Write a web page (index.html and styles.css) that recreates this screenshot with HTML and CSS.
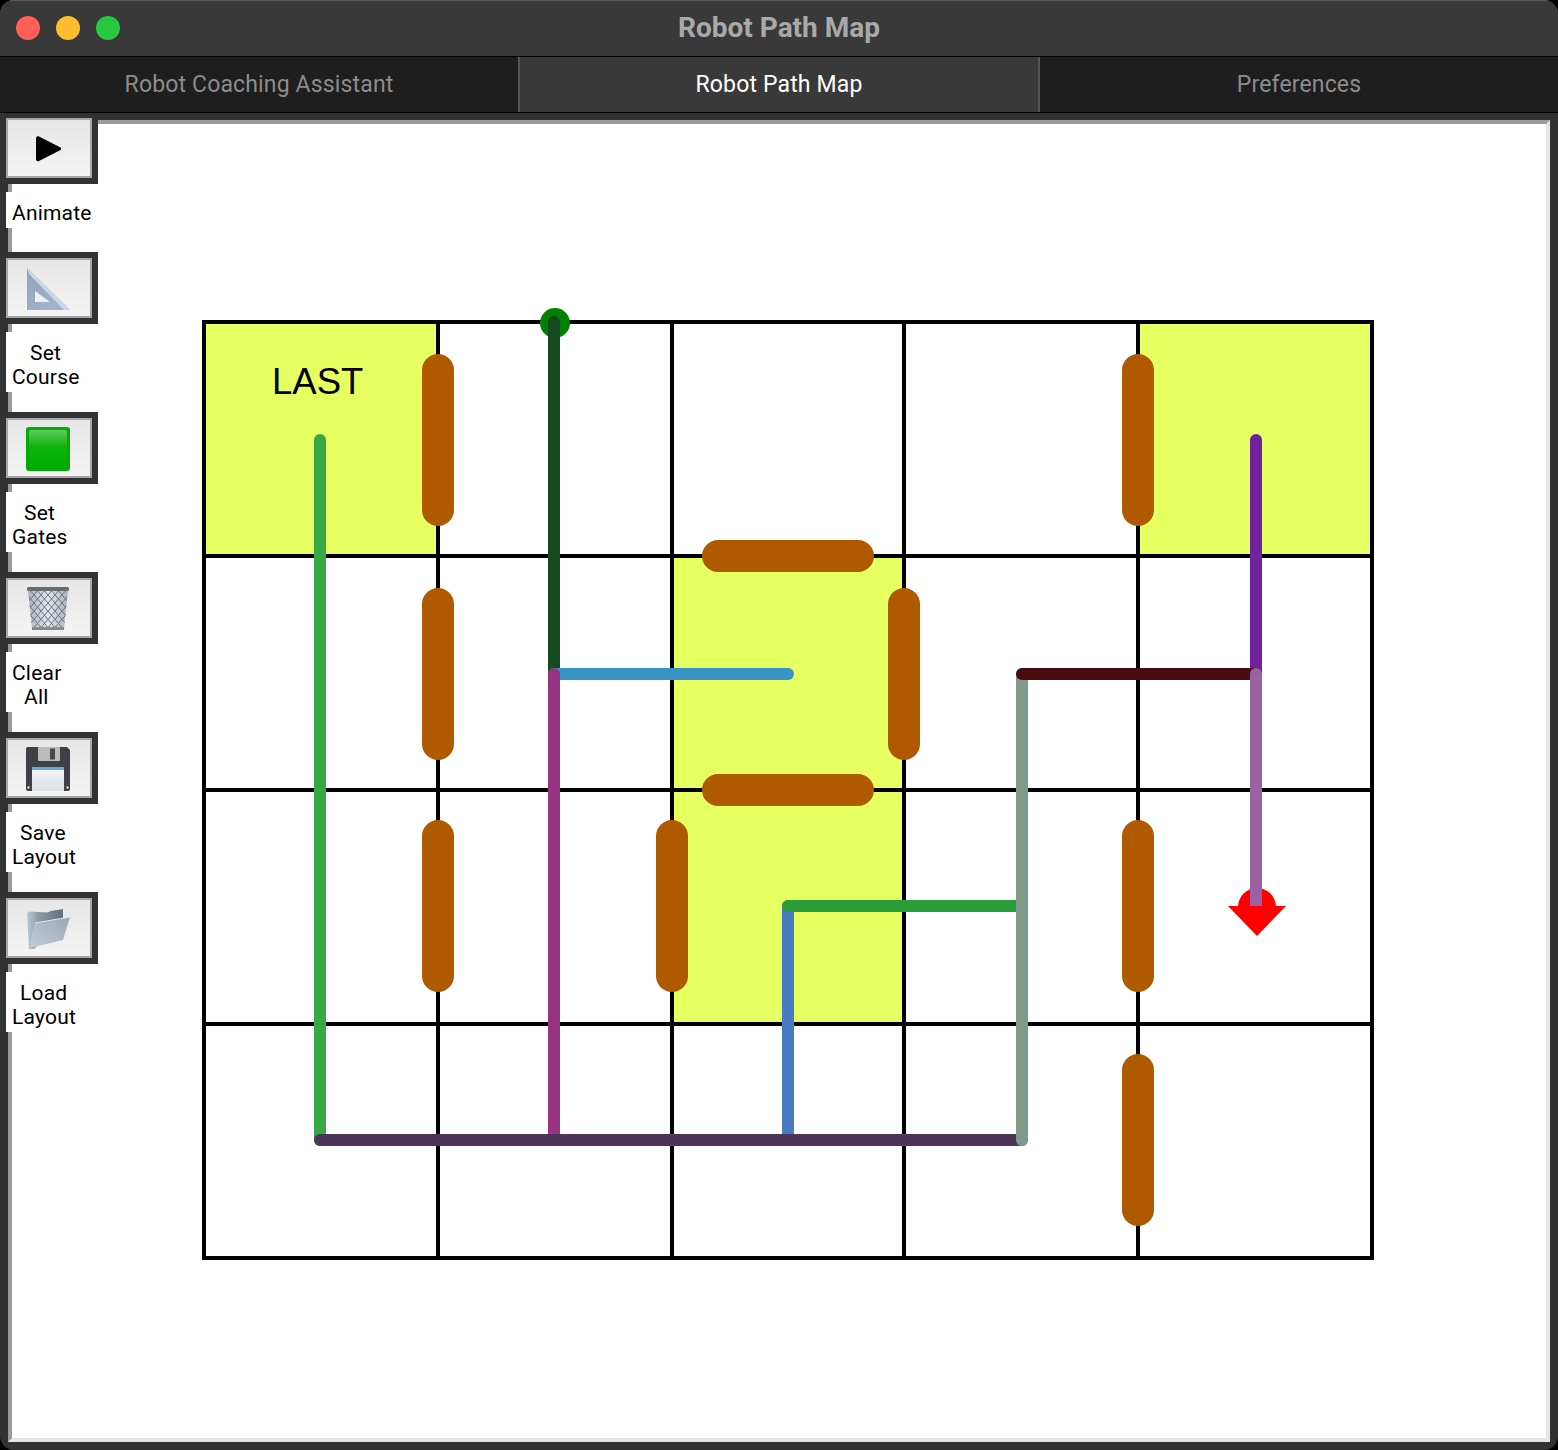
FILE: index.html
```html
<!DOCTYPE html>
<html lang="en">
<head>
  <meta charset="UTF-8">
  <title>Robot Path Map</title>
  <link rel="stylesheet" href="styles.css">
</head>
<body>
  <div class="window">

    <div class="titlebar">
      <div class="lights">
        <span class="light red"></span>
        <span class="light yellow"></span>
        <span class="light green"></span>
      </div>
      <div class="title">Robot Path Map</div>
    </div>

    <div class="tabs">
      <div class="tab">Robot Coaching Assistant</div>
      <div class="tab active">Robot Path Map</div>
      <div class="tab">Preferences</div>
    </div>

    <div class="content">
      <div class="pane">
        <svg class="map" width="1534" height="1314" viewBox="12 124 1534 1314">
          <!-- goal cells -->
          <rect class="goal" x="204" y="322" width="234" height="234"/>
          <rect class="goal" x="1138" y="322" width="234" height="234"/>
          <rect class="goal" x="672" y="556" width="232" height="468"/>

          <!-- grid -->
          <g class="grid">
            <path d="M438 322V1258M672 322V1258M904 322V1258M1138 322V1258"/>
            <path d="M204 556H1372M204 790H1372M204 1024H1372"/>
            <rect x="204" y="322" width="1168" height="936"/>
          </g>

          <text class="cell-label" x="272" y="394">LAST</text>

          <!-- walls -->
          <g class="walls">
            <path d="M438 370V510M438 604V744M438 836V976"/>
            <path d="M672 836V976"/>
            <path d="M718 556H858M718 790H858"/>
            <path d="M904 604V744"/>
            <path d="M1138 370V510M1138 836V976M1138 1070V1210"/>
          </g>

          <!-- start + end markers -->
          <circle cx="555" cy="323" r="15" fill="#028002"/>
          <circle cx="1257" cy="907" r="19" fill="#ff0000"/>

          <!-- course segments, in draw order -->
          <g class="segments">
            <path stroke="#38a845" d="M320 440V1140"/>
            <path stroke="#134a20" d="M554 322V674"/>
            <path stroke="#3794c4" d="M554 674H788"/>
            <path stroke="#993283" d="M554 674V1140"/>
            <path stroke="#4a7abf" d="M788 906V1140"/>
            <path stroke="#4b3659" d="M320 1140H1022"/>
            <path stroke="#2a9c38" d="M788 906H1022"/>
            <path stroke="#7f9a88" d="M1022 674V1140"/>
            <path stroke="#6f219e" d="M1256 440V674"/>
            <path stroke="#470d0f" d="M1022 674H1256"/>
            <path stroke="#9b61a0" d="M1256 674V906"/>
          </g>
          <polygon points="1228,906 1286,906 1257,936" fill="#ff0000"/>
        </svg>
      </div>

      <div class="toolbar">
        <div class="tool">
          <div class="tool-frame"><button class="tool-btn">
            <svg width="26" height="26" viewBox="0 0 26 26"><path d="M1 2.500C1 .6 2.600-.3 4 .5L25 11.200c1.400.8 1.400 2.400 0 3.100L4 25C2.600 25.800 1 24.900 1 23Z" fill="#000"/></svg>
          </button></div>
          <div class="tool-label">Animate</div>
        </div>

        <div class="tool">
          <div class="tool-frame"><button class="tool-btn">
            <svg width="44" height="46" viewBox="0 0 44 46">
              <defs><linearGradient id="sq" x1="0" y1="0" x2="1" y2="1"><stop offset="0" stop-color="#8ea3bf"/><stop offset="1" stop-color="#a6b8cf"/></linearGradient></defs>
              <path d="M1 2L44 44H1Z" fill="url(#sq)"/>
              <path d="M1 2L44 44H38L3 8Z" fill="#c9d7e6"/>
              <path d="M9 25L24 36H9Z" fill="#f0f0f0"/>
            </svg>
          </button></div>
          <div class="tool-label"><span class="c1">Set</span><br>Course</div>
        </div>

        <div class="tool">
          <div class="tool-frame"><button class="tool-btn">
            <svg width="44" height="44" viewBox="0 0 44 44">
              <defs><linearGradient id="gr" x1="0" y1="0" x2="0" y2="1"><stop offset="0" stop-color="#5cc95c"/><stop offset=".45" stop-color="#0cb30c"/><stop offset="1" stop-color="#00ad00"/></linearGradient></defs>
              <rect width="44" height="44" rx="3" fill="#06a806"/>
              <rect x="3" y="3" width="38" height="38" rx="2" fill="url(#gr)"/>
            </svg>
          </button></div>
          <div class="tool-label"><span class="c2">Set</span><br>Gates</div>
        </div>

        <div class="tool">
          <div class="tool-frame"><button class="tool-btn">
            <svg width="44" height="44" viewBox="0 0 44 44">
              <defs>
                <clipPath id="bin"><path d="M2 3H42L38 42H6Z"/></clipPath>
                <linearGradient id="binfill" x1="0" y1="0" x2="1" y2="0"><stop offset="0" stop-color="#aab2ba"/><stop offset=".5" stop-color="#e6e9eb"/><stop offset="1" stop-color="#aab2ba"/></linearGradient>
              </defs>
              <path d="M2 3H42L38 42H6Z" fill="url(#binfill)"/>
              <g clip-path="url(#bin)" class="mesh">
                <path d="M-18 2L18 44M-11 2L25 44M-4 2L32 44M3 2L39 44M10 2L46 44M17 2L53 44M24 2L60 44M31 2L67 44"/>
                <path d="M62 2L26 44M55 2L19 44M48 2L12 44M41 2L5 44M34 2L-2 44M27 2L-9 44M20 2L-16 44M13 2L-23 44"/>
              </g>
              <path d="M6 41.500H38" stroke="#7d8b9c" stroke-width="3"/>
              <rect x="1" y="0" width="42" height="4" rx="1.500" fill="#666c72"/>
            </svg>
          </button></div>
          <div class="tool-label">Clear<br><span class="c3">All</span></div>
        </div>

        <div class="tool">
          <div class="tool-frame"><button class="tool-btn">
            <svg width="44" height="44" viewBox="0 0 44 44">
              <defs><linearGradient id="lbl" x1="0" y1="0" x2="0" y2="1"><stop offset="0" stop-color="#f4f7fa"/><stop offset="1" stop-color="#dcdfe3"/></linearGradient></defs>
              <path d="M2 0H41L44 3V42Q44 44 42 44H2Q0 44 0 42V2Q0 0 2 0Z" fill="#3f4045"/>
              <rect x="12" y="0" width="22" height="14" rx="1" fill="#bcbcbe"/>
              <rect x="24" y="1.500" width="5" height="11" fill="#48484c"/>
              <rect x="6" y="20" width="32" height="24" fill="url(#lbl)"/>
              <rect x="6" y="20" width="32" height="3" fill="#6aa6d8"/>
              <circle cx="2.500" cy="40.500" r="1.200" fill="#ddd"/>
              <circle cx="41.500" cy="40.500" r="1.200" fill="#ddd"/>
            </svg>
          </button></div>
          <div class="tool-label"><span class="c4">Save</span><br>Layout</div>
        </div>

        <div class="tool">
          <div class="tool-frame"><button class="tool-btn">
            <svg width="44" height="42" viewBox="0 0 44 42">
              <defs>
                <linearGradient id="fb" x1="0" y1="0" x2="1" y2="0"><stop offset="0" stop-color="#bcc8d2"/><stop offset=".3" stop-color="#8b9daa"/><stop offset="1" stop-color="#60707e"/></linearGradient>
                <linearGradient id="ff" x1="0" y1="1" x2="1" y2="0"><stop offset="0" stop-color="#c2ccd4"/><stop offset="1" stop-color="#9aa9b6"/></linearGradient>
              </defs>
              <path d="M1 5L4 3.500 21 4.500 25 3 37 1V14L8 41H3Z" fill="url(#fb)"/>
              <path d="M9 15L44 9 37 32 4 40Q5 26 9 15Z" fill="url(#ff)"/>
              <path d="M9 15L44 9" stroke="#e6ebef" stroke-width="1"/>
            </svg>
          </button></div>
          <div class="tool-label"><span class="c4">Load</span><br>Layout</div>
        </div>
      </div>
    </div>

  </div>
</body>
</html>
```

FILE: styles.css
```css
* {
  box-sizing: border-box;
}

html, body {
  margin: 0;
  height: 100%;
  background: #000;
}

.window {
  display: flex;
  flex-direction: column;
  height: 1450px;
  background: #323232;
  border-radius: 14px;
  overflow: hidden;
  font-family: Roboto, sans-serif;
}

.titlebar {
  position: relative;
  flex: 0 0 57px;
  background: #393939;
  border-top: 1px solid #5c5c5c;
  border-bottom: 1px solid #000;
}

.lights {
  display: flex;
  gap: 16px;
  padding: 15px 0 0 16px;
}

.light {
  width: 24px;
  height: 24px;
  border-radius: 50%;
}

.red { background: #ff5f57; }
.yellow { background: #febc2e; }
.green { background: #28c840; }

.title {
  position: absolute;
  top: 0;
  left: 0;
  right: 0;
  line-height: 53px;
  text-align: center;
  font-size: 28px;
  font-weight: 700;
  color: #a9a9a9;
}

.tabs {
  display: flex;
  flex: 0 0 56px;
  background: #1e1e1e;
  border-bottom: 1px solid #000;
}

.tab {
  width: 518px;
  line-height: 55px;
  text-align: center;
  font-size: 23px;
  letter-spacing: .15px;
  color: #8c8c8c;
}

.tab.active {
  width: 522px;
  background: #393939;
  border-left: 2px solid #555;
  border-right: 2px solid #555;
  color: #fff;
}

.content {
  position: relative;
  flex: 1;
  padding: 7px 8px 8px 8px;
}

.pane {
  height: 100%;
  background: #fff;
  border-style: solid;
  border-width: 4px;
  border-color: #9a9a9a #e5e5e5 #e5e5e5 #9a9a9a;
}

.map {
  display: block;
}

.goal {
  fill: #e6ff61;
}

.grid {
  fill: none;
  stroke: #000;
  stroke-width: 4;
}

.cell-label {
  font-family: "Liberation Sans", sans-serif;
  font-size: 36.500px;
  fill: #000;
}

.walls {
  fill: none;
  stroke: #b05a00;
  stroke-width: 32;
  stroke-linecap: round;
}

.segments {
  fill: none;
  stroke-width: 12;
  stroke-linecap: round;
}

/* toolbar sits over the left edge of the pane */
.toolbar {
  position: absolute;
  top: 0;
  left: 6px;
  width: 92px;
  display: flex;
  flex-direction: column;
}

.tool-frame {
  padding: 6px 6px 6px 0;
  background: #323232;
}

.tool:first-child .tool-frame {
  padding-top: 5px;
}

.tool:first-child .tool-label {
  margin-bottom: 24px;
}

.tool-btn {
  display: flex;
  align-items: center;
  justify-content: center;
  width: 86px;
  height: 60px;
  padding: 2px 2px 0 0;
  background: linear-gradient(#e6e6e6, #f4f4f4);
  border: 2px solid #a6a6a6;
}

.tool-label {
  width: 92px;
  margin: 8px 0 20px;
  padding: 9px 0 3px 6px;
  background: #fff;
  font-size: 21px;
  line-height: 24px;
  letter-spacing: .2px;
  color: #000;
}

.c1 { margin-left: 18px; }
.c2 { margin-left: 12px; }
.c3 { margin-left: 12px; }
.c4 { margin-left: 8px; }

.mesh {
  fill: none;
  stroke: #67727f;
  stroke-width: 1;
}
```
